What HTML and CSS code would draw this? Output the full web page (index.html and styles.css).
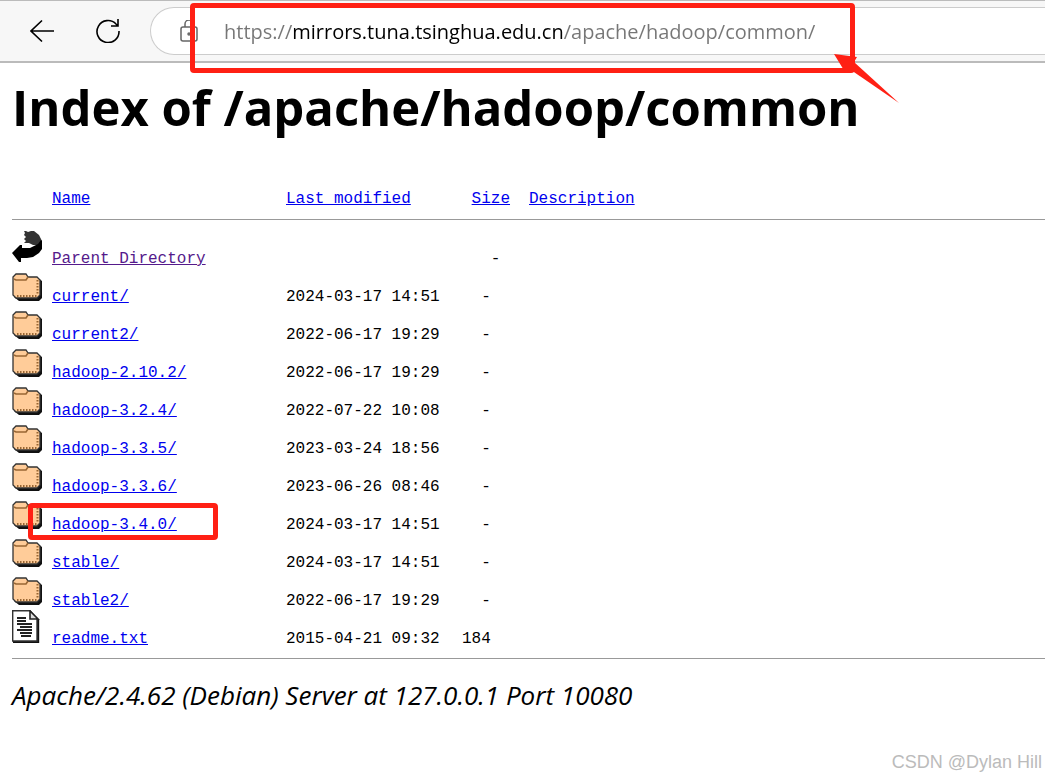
FILE: index.html
```
<!DOCTYPE html>
<html lang="en">
<head>
    <title>Index of /apache/hadoop/common</title>
    <meta charset="utf-8">
    <meta name="viewport" content="width=device-width, initial-scale=1">
    <link rel="stylesheet" href="styles.css">
</head>
<body>
    <svg class="sprite" aria-hidden="true">
        <symbol id="folder" viewBox="0 0 30 33">
            <path d="M4 10h22l4 3v17l-3 3H7l-5-4z" fill="#111"/>
            <path d="M1 9l3-3h10l2 3h9l3 3v15l-3 3H4l-3-3z" fill="#ffcc99" stroke="#333" stroke-width="1.3"/>
            <path d="M2 11l2 1h10l2-3" fill="none" stroke="#996633" stroke-width="1.6"/>
            <path d="M5 28h20" stroke="#996633" stroke-width="2" stroke-dasharray="1.5 1.5"/>
            <path d="M25.5 12v15" stroke="#996633" stroke-width="2" stroke-dasharray="1.5 1.5"/>
        </symbol>
        <symbol id="back" viewBox="0 0 30 33">
            <path d="M12 1h2l2 1 3-1h3l5 4 3 6-4 4h-5l-4-2h-5l2-2-2-2 2-2-2-2 1-2z" fill="#333"/>
            <path d="M28 9l2 2v8l-3 4-6 4-6 1H9v4H7l-7-9 8-8h2v3h8l8-4 3-4z" fill="#000"/>
        </symbol>
        <symbol id="text" viewBox="0 0 30 33">
            <path d="M1 32H26V9" fill="none" stroke="#111" stroke-width="2.4"/>
            <path d="M.7.7H18l7 8V31H.7z" fill="#fff" stroke="#333" stroke-width="1.4"/>
            <path d="M18 1v8h8z" fill="#ddd" stroke="#222" stroke-width="1.6"/>
            <path d="M5 8h9M5 11h9M5 14h15M8 17h12M5 20h15M8 23h12M9 26h10" stroke="#222" stroke-width="1.8"/>
        </symbol>
    </svg>

    <header class="toolbar">
        <button class="tool" aria-label="Back">
            <svg width="24" height="24" viewBox="0 0 24 24"><path d="M24 12H1M12 1.5L1 12l11 10.5"/></svg>
        </button>
        <button class="tool" aria-label="Refresh">
            <svg width="24" height="24" viewBox="0 0 24 24"><path d="M23 12A11 11 0 1 1 20 5l2 2M22 0v7h-7"/></svg>
        </button>
        <div class="address">
            <svg class="lock" width="18" height="22" viewBox="0 0 18 22"><rect x="1" y="7" width="16" height="14" rx="2"/><path d="M5 7V4a4 4 0 0 1 8 0v3"/><circle cx="9" cy="14" r="1"/></svg>
            <input class="url" type="text" aria-label="Address" value="https://mirrors.tuna.tsinghua.edu.cn/apache/hadoop/common/">
            <div class="mark mark-url"></div>
            <svg class="arrow" width="66" height="50" viewBox="0 0 66 50"><path d="M0 0l23 3-3 5 45 41-48-33-6 2z" fill="#ff2014"/></svg>
        </div>
    </header>

    <main>
        <h1>Index of /apache/hadoop/common</h1>
        <table class="listing">
            <thead>
                <tr>
                    <th class="icon"></th>
                    <th class="name"><a href="#">Name</a></th>
                    <th class="modified"><a href="#">Last modified</a></th>
                    <th class="size"> <a href="#">Size</a></th>
                    <th><a href="#">Description</a></th>
                </tr>
            </thead>
            <tbody>
                <tr><td><svg class="ico"><use href="#back"/></svg></td><td><a class="visited" href="#">Parent Directory</a></td><td></td><td class="size">   -</td><td></td></tr>
                <tr><td><svg class="ico"><use href="#folder"/></svg></td><td><a href="#">current/</a></td><td>2024-03-17 14:51</td><td class="size">  -</td><td></td></tr>
                <tr><td><svg class="ico"><use href="#folder"/></svg></td><td><a href="#">current2/</a></td><td>2022-06-17 19:29</td><td class="size">  -</td><td></td></tr>
                <tr><td><svg class="ico"><use href="#folder"/></svg></td><td><a href="#">hadoop-2.10.2/</a></td><td>2022-06-17 19:29</td><td class="size">  -</td><td></td></tr>
                <tr><td><svg class="ico"><use href="#folder"/></svg></td><td><a href="#">hadoop-3.2.4/</a></td><td>2022-07-22 10:08</td><td class="size">  -</td><td></td></tr>
                <tr><td><svg class="ico"><use href="#folder"/></svg></td><td><a href="#">hadoop-3.3.5/</a></td><td>2023-03-24 18:56</td><td class="size">  -</td><td></td></tr>
                <tr><td><svg class="ico"><use href="#folder"/></svg></td><td><a href="#">hadoop-3.3.6/</a></td><td>2023-06-26 08:46</td><td class="size">  -</td><td></td></tr>
                <tr><td><svg class="ico"><use href="#folder"/></svg></td><td class="marked"><a href="#">hadoop-3.4.0/</a><div class="mark mark-row"></div></td><td>2024-03-17 14:51</td><td class="size">  -</td><td></td></tr>
                <tr><td><svg class="ico"><use href="#folder"/></svg></td><td><a href="#">stable/</a></td><td>2024-03-17 14:51</td><td class="size">  -</td><td></td></tr>
                <tr><td><svg class="ico"><use href="#folder"/></svg></td><td><a href="#">stable2/</a></td><td>2022-06-17 19:29</td><td class="size">  -</td><td></td></tr>
                <tr><td><svg class="ico"><use href="#text"/></svg></td><td><a href="#">readme.txt</a></td><td>2015-04-21 09:32</td><td class="size">184</td><td></td></tr>
            </tbody>
        </table>
        <address>Apache/2.4.62 (Debian) Server at 127.0.0.1 Port 10080</address>
    </main>
    <div class="watermark">CSDN @Dylan Hill</div>
</body>
</html>
```
FILE: styles.css
```
:root {
    --red: #ff2014;
}

* {
    box-sizing: border-box;
}

body {
    margin: 0;
    min-height: 100vh;
    position: relative;
    background: #fff;
    color: #000;
    font-family: "Open Sans", "Noto Sans", sans-serif;
    overflow-x: hidden;
}

.sprite {
    display: none;
}

.toolbar {
    display: flex;
    align-items: center;
    height: 63px;
    padding-left: 30px;
    background: #f7f7f7;
    border-top: 1px solid #bbb;
    border-bottom: 2px solid #bbb;
}

.tool {
    display: flex;
    width: 24px;
    margin-right: 42px;
    padding: 0;
    border: none;
    background: none;
}

.tool svg {
    fill: none;
    stroke: #000;
    stroke-width: 1.6;
}

.address {
    position: relative;
    display: flex;
    align-items: center;
    flex: 1;
    height: 48px;
    margin-left: -12px;
    padding-left: 29px;
    background: #fff;
    border: 1px solid #ccc;
    border-right: none;
    border-radius: 24px 0 0 24px;
}

.lock {
    flex: none;
    margin-right: 26px;
    fill: none;
    stroke: #666;
    stroke-width: 1.5;
}

.url {
    flex: 1;
    min-width: 0;
    height: 32px;
    padding: 0;
    border: none;
    outline: none;
    font: 20px "Open Sans", "Noto Sans", sans-serif;
    color: transparent;
    /* only the host name is black */
    background: linear-gradient(90deg, #767676 68px, #000 68px, #000 340px, #767676 340px);
    -webkit-background-clip: text;
    background-clip: text;
}

.mark {
    position: absolute;
    border: 5px solid var(--red);
    border-radius: 4px;
    pointer-events: none;
}

.mark-url {
    top: -5px;
    left: 39px;
    width: 665px;
    height: 70px;
}

.arrow {
    position: absolute;
    top: 46px;
    left: 683px;
}

main {
    padding-left: 12px;
}

h1 {
    margin: 10px 0 46px;
    font-size: 49px;
    line-height: 68px;
    white-space: nowrap;
}

.listing {
    width: 100%;
    table-layout: fixed;
    border-collapse: separate;
    border-spacing: 0;
    border-bottom: 1px solid #999;
    padding-bottom: 10px;
    font: 16px/18px "Liberation Mono", monospace;
}

.listing th,
.listing td {
    padding: 0;
    text-align: left;
    font-weight: normal;
    vertical-align: baseline;
}

.listing th {
    height: 33px;
    padding-top: 3px;
    border-bottom: 1px solid #999;
}

.listing td {
    height: 38px;
}

.listing tbody tr:first-child td {
    height: 48px;
    padding-top: 10px;
}

.icon {
    width: 40px;
}

.name {
    width: 234px;
}

.modified {
    width: 176px;
}

.size {
    width: 67px;
    white-space: pre;
}

.ico {
    width: 30px;
    height: 33px;
}

.marked {
    position: relative;
}

.mark-row {
    top: 7px;
    left: -24px;
    width: 190px;
    height: 37px;
}

a {
    color: #0000ee;
}

.visited {
    color: #551a8b;
}

address {
    margin: 18px 0;
    font-size: 26px;
    line-height: 36px;
}

.watermark {
    position: absolute;
    right: 3px;
    bottom: 6px;
    color: #bbb;
    font: 18px/24px "Liberation Sans", sans-serif;
}
```
